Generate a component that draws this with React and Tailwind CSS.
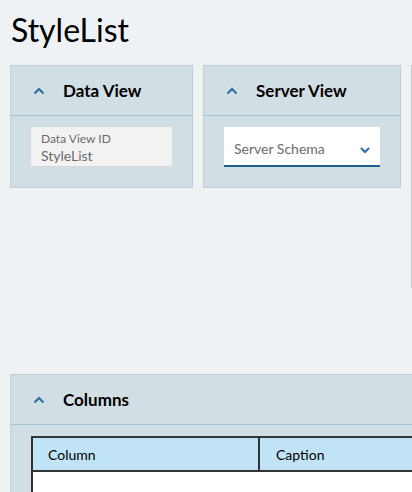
const Caret = () => (
  <svg width="12" height="8" viewBox="0 0 12 8" className="shrink-0">
    <path d="M1.5 6.5 L6 2 L10.5 6.5" fill="none" stroke="#2a6ea6" strokeWidth="2" />
  </svg>
)

const PanelHeader = ({ title }) => (
  <div className="h-[50px] flex items-center pl-[22px] border-b border-[#9fc6cf]">
    <Caret />
    <span className="ml-[18px] text-[17px] font-bold text-black">{title}</span>
  </div>
)

export default function App() {
  return (
    <div
      className="min-h-[492px] bg-[#eef2f5] overflow-hidden"
      style={{ fontFamily: "Lato, 'Noto Sans', sans-serif" }}
    >
      {/* Title */}
      <h1 className="pl-[11px] pt-[10px] h-[65px] text-[32px] leading-[40px] text-black">StyleList</h1>

      {/* Top panels row */}
      <div className="flex gap-[10px] pl-[10px] h-[309px] items-start">
        <div className="w-[183px] shrink-0 bg-[#d1dee3] border border-[#bfcfd5] pb-[20px]">
          <PanelHeader title="Data View" />
          <div className="px-[20px] pt-[11px]">
            <div className="h-[40px] bg-[#f2f2f2] px-[10px] pt-[4px] text-[#6b6b6b] border-b border-[#d8d8d8]">
              <div className="text-[12px] leading-[16px]">Data View ID</div>
              <div className="text-[14px] leading-[17px]">StyleList</div>
            </div>
          </div>
        </div>

        <div className="w-[198px] shrink-0 bg-[#d1dee3] border border-[#bfcfd5] pb-[20px]">
          <PanelHeader title="Server View" />
          <div className="px-[20px] pt-[11px]">
            <div className="h-[40px] bg-white border-b-2 border-[#1f5f8f] flex items-center justify-between pl-[10px] pr-[9px] text-[#6b6b6b]">
              <span className="text-[14px] pt-[4px]">Server Schema</span>
              <svg width="12" height="8" viewBox="0 0 12 8" className="mt-[8px]">
                <path d="M2 2 L6 6 L10 2" fill="none" stroke="#2a6ea6" strokeWidth="2" />
              </svg>
            </div>
          </div>
        </div>

        <div className="w-[40px] shrink-0 h-[223px] bg-[#eef2f5] border-l border-[#c3cdd2]" />
      </div>

      {/* Columns panel */}
      <div className="ml-[10px] w-[420px] bg-[#d1dee3] border border-[#bfcfd5] h-[130px]">
        <PanelHeader title="Columns" />
        <div className="pl-[20px] pt-[11px]">
          <div className="bg-white border-2 border-[#333] border-r-0 h-[80px]">
            <div className="flex h-[34px] bg-[#c0e4f5] border-b-2 border-[#333] text-[14px] text-black">
              <div className="w-[227px] border-r-2 border-[#333] flex items-center pl-[15px]">Column</div>
              <div className="flex-1 flex items-center pl-[16px]">Caption</div>
            </div>
          </div>
        </div>
      </div>
    </div>
  )
}
